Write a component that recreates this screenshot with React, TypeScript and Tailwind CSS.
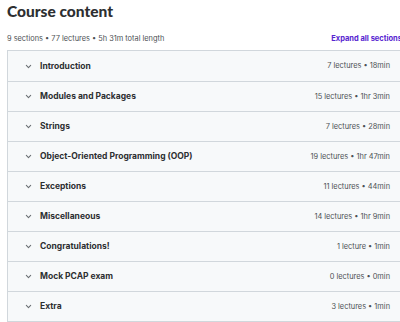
const sections = [
  { title: "Introduction", meta: "7 lectures • 18min" },
  { title: "Modules and Packages", meta: "15 lectures • 1hr 3min" },
  { title: "Strings", meta: "7 lectures • 28min" },
  { title: "Object-Oriented Programming (OOP)", meta: "19 lectures • 1hr 47min" },
  { title: "Exceptions", meta: "11 lectures • 44min" },
  { title: "Miscellaneous", meta: "14 lectures • 1hr 9min" },
  { title: "Congratulations!", meta: "1 lecture • 1min" },
  { title: "Mock PCAP exam", meta: "0 lectures • 0min" },
  { title: "Extra", meta: "3 lectures • 1min" },
];

const Chevron = () => (
  <svg width="9" height="9" viewBox="0 0 10 10" fill="none">
    <path d="M2.6 3.8 L5 6.2 L7.4 3.8" stroke="#6a6f73" strokeWidth="1.2" strokeLinecap="round" strokeLinejoin="round" />
  </svg>
);

const App = () => {
  return (
    <div className="w-[400px] h-[322px] overflow-hidden bg-white text-[#2d2f31]" style={{ fontFamily: "Inter, 'Noto Sans', sans-serif" }}>
      <div className="w-[412px] pl-[7px]">
        <h2 className="pt-[1px] text-[15.5px] font-black leading-[21px]" style={{ fontFamily: "Lato, sans-serif" }}>Course content</h2>
        <div className="mt-[11px] flex items-center justify-between pr-[10px] h-[12px]">
          <span className="text-[7.4px] text-[#4d5155]">9 sections • 77 lectures • 5h 31m total length</span>
          <span className="text-[7.5px] font-bold text-[#5624d0]">Expand all sections</span>
        </div>
        <div className="mt-[5px] border border-[#d1d7dc] w-[400px]">
          {sections.map((s, i) => (
            <div
              key={s.title}
              className={`flex items-center justify-between h-[30px] bg-[#f7f9fa] pl-[16px] pr-[16px] ${i > 0 ? "border-t border-[#d1d7dc]" : ""}`}
            >
              <div className="flex items-center gap-[7px]">
                <Chevron />
                <span className="text-[8.5px] font-bold text-[#2d2f31]">{s.title}</span>
              </div>
              <span className="text-[7.4px] text-[#4d5155]">{s.meta}</span>
            </div>
          ))}
        </div>
      </div>
    </div>
  );
};

export default App;
